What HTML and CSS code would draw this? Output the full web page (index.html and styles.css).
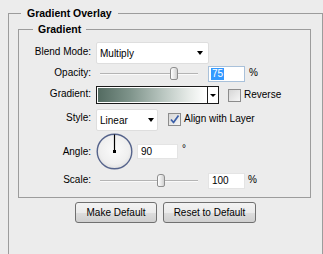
FILE: index.html
```html
<!DOCTYPE html>
<html>
<head>
<meta charset="utf-8">
<link rel="stylesheet" href="styles.css">
</head>
<body>
<fieldset class="panel">
  <legend class="panel-title">Gradient Overlay</legend>
  <fieldset class="group">
    <legend class="group-title">Gradient</legend>

    <div class="row row-blend">
      <span class="label">Blend Mode:</span>
      <div class="select select-blend"><span class="select-text">Multiply</span><span class="arrow"></span></div>
    </div>

    <div class="row row-opacity">
      <span class="label">Opacity:</span>
      <div class="slider"><div class="track"></div><div class="thumb thumb-opacity"></div></div>
      <div class="field field-focus"><span class="selected">75</span></div>
      <span class="unit">%</span>
    </div>

    <div class="row row-gradient">
      <span class="label">Gradient:</span>
      <div class="swatch"><div class="swatch-fill"></div><div class="swatch-btn"><span class="arrow arrow-small"></span></div></div>
      <span class="check check-reverse"></span>
      <span class="check-label">Reverse</span>
    </div>

    <div class="row row-style">
      <span class="label">Style:</span>
      <div class="select select-style"><span class="select-text">Linear</span><span class="arrow"></span></div>
      <span class="check check-align">
        <svg width="11" height="11" viewBox="0 0 11 11"><path d="M2 5.5 L4.5 8.5 L9.5 1.5" fill="none" stroke="#3b5fa8" stroke-width="1.7" stroke-linejoin="round"/></svg>
      </span>
      <span class="check-label">Align with Layer</span>
    </div>

    <div class="row row-angle">
      <span class="label">Angle:</span>
      <svg class="dial" width="37" height="37" viewBox="0 0 37 37">
        <defs>
          <radialGradient id="dg" cx="50%" cy="45%" r="60%">
            <stop offset="0" stop-color="#fbfbfb"/>
            <stop offset="0.7" stop-color="#efefef"/>
            <stop offset="1" stop-color="#dadada"/>
          </radialGradient>
        </defs>
        <circle cx="18.5" cy="18.5" r="17.3" fill="url(#dg)" stroke="#56648c" stroke-width="1.4"/>
        <line x1="18.5" y1="18.5" x2="18.5" y2="1.5" stroke="#000" stroke-width="1.2"/>
        <rect x="17" y="17" width="3" height="3" fill="#000"/>
      </svg>
      <div class="field field-angle">90</div>
      <span class="deg">°</span>
    </div>

    <div class="row row-scale">
      <span class="label">Scale:</span>
      <div class="slider"><div class="track"></div><div class="thumb thumb-scale"></div></div>
      <div class="field">100</div>
      <span class="unit unit-scale">%</span>
    </div>
  </fieldset>

  <div class="buttons">
    <button class="btn btn-make">Make Default</button>
    <button class="btn btn-reset">Reset to Default</button>
  </div>
</fieldset>
</body>
</html>
```
FILE: styles.css
```css
html, body {
  margin: 0;
  padding: 0;
  background: #ececec;
  overflow: hidden;
}
body {
  font-family: "Liberation Sans", Arial, sans-serif;
  font-size: 10px;
  color: #000;
}
.panel {
  margin: 7px 0 0 8px;
  padding: 4px 0 60px 0;
  border: 1px solid #9c9c9c;
  min-inline-size: 0;
}
.panel-title {
  font-weight: bold;
  font-size: 10.5px;
  line-height: 12px;
  padding: 0 6px;
  margin-left: 12px;
}
.group {
  margin: 0 11px 0 9px;
  padding: 7px 0 8px 0;
  border: 1px solid #9c9c9c;
  min-inline-size: 0;
}
.group-title {
  font-weight: bold;
  font-size: 10.5px;
  line-height: 12px;
  padding: 0 5px;
  margin-left: 14px;
}
.row {
  display: flex;
  align-items: center;
}
.label {
  width: 72px;
  text-align: right;
  margin-right: 5px;
  flex: none;
  line-height: 12px;
}
.row-blend { height: 22px; }
.row-opacity { height: 16px; margin-top: 2px; }
.row-gradient { height: 18px; margin-top: 4px; }
.row-style { height: 22px; margin-top: 5px; }
.row-angle { height: 37px; margin-top: 2px; }
.row-scale { height: 16px; margin-top: 3px; }

.row-blend .label { margin-top: -3px; }
.row-style .label { margin-top: -4px; }
.row-opacity .label { margin-top: -2px; }
.row-gradient .label { margin-top: -3px; }
.row-scale .label { margin-top: -2px; }

.select {
  box-sizing: border-box;
  height: 22px;
  background: #fff;
  border: 1px solid #dedede;
  border-radius: 2px;
  display: flex;
  align-items: center;
  justify-content: space-between;
  padding: 0 5px 0 3px;
}
.select-text { line-height: 12px; margin-top: 1px; }
.select-blend { width: 113px; }
.select-style { width: 62px; padding-right: 3px; }
.arrow {
  width: 0;
  height: 0;
  border-left: 3.5px solid transparent;
  border-right: 3.5px solid transparent;
  border-top: 4px solid #000;
}
.arrow-small {
  border-left-width: 3px;
  border-right-width: 3px;
  border-top-width: 3px;
}

.slider {
  position: relative;
  width: 106px;
  height: 16px;
  flex: none;
}
.track {
  position: absolute;
  left: 4px;
  right: 4px;
  top: 7px;
  height: 1px;
  background: #b4b4b4;
  border-bottom: 1px solid #fafafa;
}
.thumb {
  position: absolute;
  top: 1px;
  width: 8px;
  height: 13px;
  box-sizing: border-box;
  border: 1px solid #8e8e8e;
  border-radius: 3px 3px 2px 2px;
  background: linear-gradient(to right, #ffffff, #e4e4e4 60%, #cfcfcf);
}
.thumb-opacity { left: 74px; }
.thumb-scale { left: 61px; }

.field {
  box-sizing: border-box;
  width: 37px;
  height: 16px;
  margin-left: 6px;
  background: #fff;
  border: 1px solid #e4e4e4;
  padding-left: 3px;
  line-height: 14px;
  flex: none;
}
.field-focus {
  border-color: #a9c1da;
  padding-left: 2px;
  display: flex;
  align-items: center;
}
.selected {
  background: #3399ff;
  color: #fff;
  line-height: 12px;
  padding: 0 1px;
}
.unit { margin-left: 4px; line-height: 12px; margin-top: -3px; }
.unit-scale { margin-left: 3px; }

.swatch {
  box-sizing: border-box;
  width: 123px;
  height: 18px;
  border: 1px solid #1a1a1a;
  display: flex;
  flex: none;
}
.swatch-fill {
  flex: 1;
  border: 1px solid #fff;
  background: linear-gradient(to right, #536b61, #7f948b 30%, #b9c6c0 60%, #e8ece9 85%, #ffffff);
}
.swatch-btn {
  width: 10px;
  border-left: 1px solid #1a1a1a;
  background: #fff;
  display: flex;
  align-items: center;
  justify-content: center;
}

.check {
  box-sizing: border-box;
  width: 13px;
  height: 13px;
  border: 1px solid #8c8c8c;
  background: linear-gradient(135deg, #d6d6d6, #f6f6f6);
  flex: none;
  display: flex;
  align-items: center;
  justify-content: center;
}
.check-reverse { margin-left: 9px; }
.check-align { margin-left: 10px; margin-top: -2px; }
.check-label { margin-left: 3px; line-height: 12px; }
.row-style .check-label { margin-top: -2px; }

.dial { flex: none; }
.field-angle { width: 41px; height: 15px; margin-left: 4px; line-height: 13px; }
.deg { margin-left: 4px; margin-top: -6px; line-height: 12px; }

.buttons {
  display: flex;
  justify-content: center;
  gap: 6px;
  margin-top: 4px;
}
.btn {
  box-sizing: border-box;
  height: 21px;
  font-family: "Liberation Sans", Arial, sans-serif;
  font-size: 10px;
  color: #000;
  border: 1px solid #707070;
  border-radius: 3px;
  background: linear-gradient(#f3f3f3, #ebebeb 50%, #dddddd 51%, #cfcfcf);
  padding: 0;
  margin: 0;
}
.btn-make { width: 82px; }
.btn-reset { width: 93px; }
```
